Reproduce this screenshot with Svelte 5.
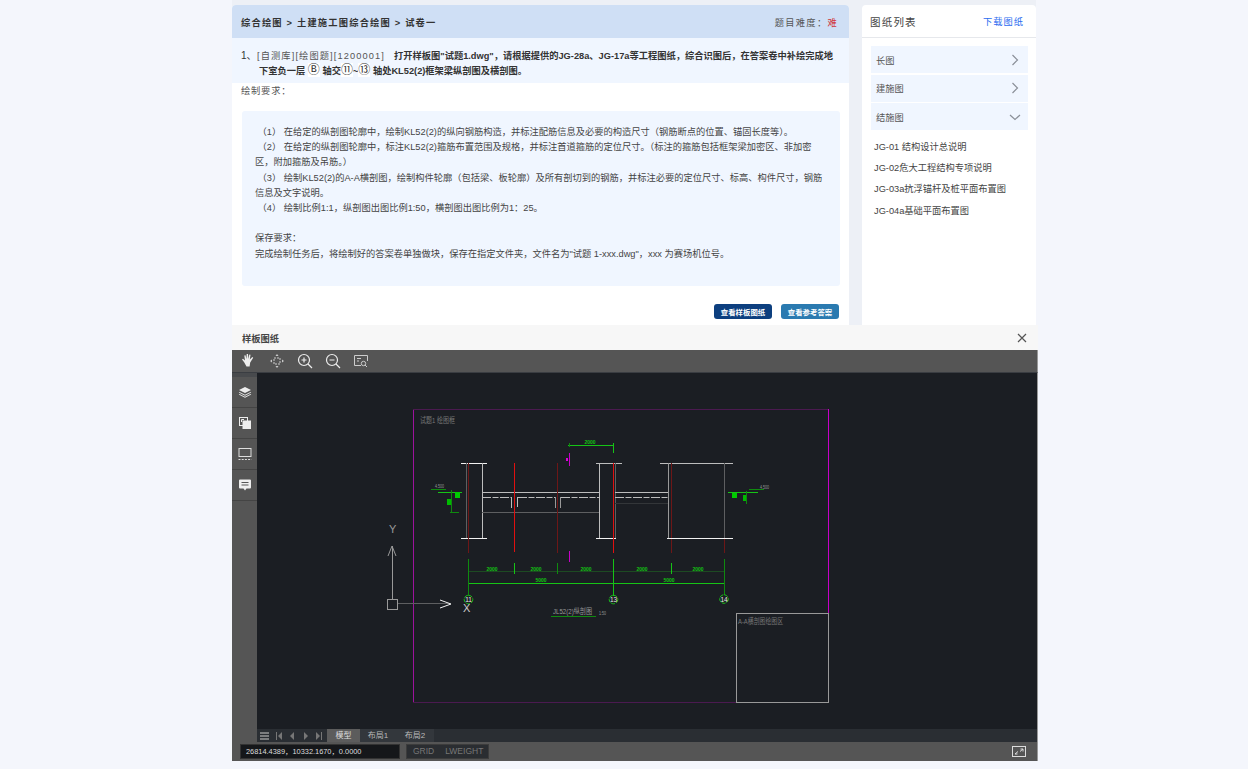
<script>
  const drawings = [
    { name: '长图', open: false },
    { name: '建施图', open: false },
    { name: '结施图', open: true }
  ];
  const files = ['JG-01 结构设计总说明', 'JG-02危大工程结构专项说明', 'JG-03a抗浮锚杆及桩平面布置图', 'JG-04a基础平面布置图'];

  // 图纸线条: [x1, y1, x2, y2, 颜色类]
  const lines = [
    [413.5, 409, 413.5, 703, 'mag'], [413, 409.5, 829, 409.5, 'dimmag'], [828.5, 409, 828.5, 613, 'magb'], [413, 702.5, 736, 702.5, 'dimmag'],
    [736.5, 613.5, 828.5, 613.5, 'gray'], [736.5, 613, 736.5, 703, 'gray'], [828.5, 613, 828.5, 703, 'gray'], [736, 702.5, 829, 702.5, 'gray'],
    [461, 463.5, 487, 463.5, 'white'], [461, 538.5, 487, 538.5, 'white'], [482.5, 463, 482.5, 538, 'light'], [466.5, 463, 466.5, 538, 'dim'],
    [468.5, 463, 468.5, 553, 'dred'], [482, 492.5, 600, 492.5, 'light'], [482, 512.5, 600, 512.5, 'dim'],
    [514.5, 463, 514.5, 552, 'red'], [557.5, 463, 557.5, 553, 'dred'],
    [511.5, 497, 511.5, 508, 'light'], [517.5, 497, 517.5, 507, 'light'], [555.5, 497, 555.5, 508, 'gray'], [560.5, 497, 560.5, 508, 'gray'],
    [599.5, 463, 599.5, 538, 'light'], [596, 463.5, 622, 463.5, 'light'], [596, 538.5, 616, 538.5, 'white'], [615.5, 463, 615.5, 538, 'dim'],
    [613.5, 463, 613.5, 553, 'red'], [615, 492.5, 669, 492.5, 'light'], [615, 503.5, 668, 503.5, 'faint'],
    [660, 463.5, 733, 463.5, 'light'], [668.5, 463, 668.5, 538, 'gray'], [671.5, 463, 671.5, 553, 'dred'], [724.5, 463, 724.5, 538, 'dim'],
    [724.5, 538, 724.5, 553, 'dred'], [667, 538.5, 733, 538.5, 'white'],
    [568, 445.5, 614, 445.5, 'green'], [613.5, 443, 613.5, 453, 'green'], [569.5, 443, 569.5, 447, 'dgreen'],
    [569.5, 453, 569.5, 466, 'magb'], [569.5, 551, 569.5, 562, 'magb'],
    [431, 489.5, 446, 489.5, 'dgreen'], [438, 492.5, 462, 492.5, 'green'], [451.5, 490, 451.5, 512, 'dgreen'], [450, 512.5, 459, 512.5, 'dgreen'],
    [728, 492.5, 758, 492.5, 'green'], [749, 489.5, 764, 489.5, 'dgreen'], [746.5, 491, 746.5, 504, 'dgreen'],
    [468, 571.5, 725, 571.5, 'dimgreen'], [468, 583.5, 725, 583.5, 'green'], [468.5, 559, 468.5, 596, 'dgreen'], [514.5, 563, 514.5, 574, 'green'],
    [557.5, 563, 557.5, 574, 'dgreen'], [613.5, 559, 613.5, 596, 'green'], [671.5, 563, 671.5, 574, 'green'], [724.5, 559, 724.5, 595, 'dgreen'],
    [392.5, 546, 392.5, 600, 'gray'], [398, 603.5, 450, 603.5, 'dim'], [392, 546, 388, 556, 'gray'], [392, 546, 396, 556, 'gray'],
    [440, 600, 451, 604, 'white'], [440, 608, 451, 604, 'white'], [551, 616.5, 596, 616.5, 'dgreen']
  ];
  const dashes = [[482, 497.5, 511, 497.5], [518, 497.5, 555, 497.5], [561, 497.5, 600, 497.5], [615, 497.5, 669, 497.5]];
  const dims = [[492, 571, '2000'], [536, 571, '2000'], [586, 571, '2000'], [642, 571, '2000'], [698, 571, '2000'], [541, 582, '5000'], [669, 582, '5000'], [590, 444, '2000']];
  const axes = [[468.5, 599.5, '11'], [613.5, 599.5, '13'], [724, 599, '14']];
</script>

<div class="page">
  <div class="inner">
    <main class="main">
      <div class="crumb">
        <span class="path">综合绘图 &gt; 土建施工图综合绘图 &gt; 试卷一</span>
        <span class="level">题目难度：<em>难</em></span>
      </div>
      <div class="question">
        <p class="q-line"><span class="no">1、</span><span class="tag">[自测库][绘图题][1200001]</span><b>打开样板图"试题1.dwg"，请根据提供的JG-28a、JG-17a等工程图纸，综合识图后，在答案卷中补绘完成地</b></p>
        <p class="q-next"><b>下室负一层 <i>Ⓑ</i> 轴交<i>⑪</i>~<i>⑬</i> 轴处KL52(2)框架梁纵剖图及横剖图。</b></p>
      </div>
      <div class="req-title">绘制要求：</div>
      <div class="req">
        <p>&nbsp;（1） 在给定的纵剖图轮廓中，绘制KL52(2)的纵向钢筋构造，并标注配筋信息及必要的构造尺寸（钢筋断点的位置、锚固长度等）。</p>
        <p>&nbsp;（2） 在给定的纵剖图轮廓中，标注KL52(2)箍筋布置范围及规格，并标注首道箍筋的定位尺寸。（标注的箍筋包括框架梁加密区、非加密<br />区，附加箍筋及吊筋。）</p>
        <p>&nbsp;（3） 绘制KL52(2)的A-A横剖图，绘制构件轮廓（包括梁、板轮廓）及所有剖切到的钢筋，并标注必要的定位尺寸、标高、构件尺寸，钢筋<br />信息及文字说明。</p>
        <p>&nbsp;（4） 绘制比例1:1，纵剖图出图比例1:50，横剖图出图比例为1：25。</p>
        <p>&nbsp;</p>
        <p>保存要求：</p>
        <p>完成绘制任务后，将绘制好的答案卷单独做块，保存在指定文件夹，文件名为"试题 1-xxx.dwg"，xxx 为赛场机位号。</p>
      </div>
      <div class="actions">
        <button class="btn navy">查看样板图纸</button>
        <button class="btn teal">查看参考答案</button>
      </div>
    </main>

    <aside class="side">
      <div class="side-head">
        <span class="side-title">图纸列表</span>
        <span class="download">下载图纸</span>
      </div>
      <div class="groups">
        {#each drawings as d}
          <div class="group">
            <span>{d.name}</span>
            <svg width="12" height="12" viewBox="0 0 12 12" fill="none" stroke="#8a8f98" stroke-width="1.2">
              {#if d.open}
                <path d="M1 4l5 4.500 5-4.500" />
              {:else}
                <path d="M3.500 1l5 5-5 5" />
              {/if}
            </svg>
          </div>
        {/each}
      </div>
      <ul class="files">
        {#each files as f}
          <li>{f}</li>
        {/each}
      </ul>
    </aside>
  </div>
</div>

<section class="modal">
  <header class="modal-head">
    <span>样板图纸</span>
    <svg width="10" height="10" viewBox="0 0 10 10" stroke="#555" stroke-width="1.2"><path d="M1 1l8 8M9 1l-8 8" /></svg>
  </header>
  <div class="toolbar">
    <svg width="16" height="16" viewBox="0 0 16 16" fill="#eee"><path d="M3 9L1 6.500l1-.7 2 1.700L3.300 2.500l1.200-.2 1 3.700.2-5h1.300l.3 5 1-4.500 1.200.3-.7 4.700 2.500-2.500.9.800-3 4.800-.6 3.900H5.500z" /></svg>
    <svg width="16" height="16" viewBox="0 0 16 16" fill="none" stroke="#ccc"><rect x="5" y="5" width="6" height="6" stroke-dasharray="2 1" /><path d="M8 1l-1.500 2h3zM8 15l-1.500-2h3zM1 8l2-1.500v3zM15 8l-2-1.500v3z" fill="#ccc" stroke="none" /></svg>
    <svg width="16" height="16" viewBox="0 0 16 16" fill="none" stroke="#eee" stroke-width="1.200"><circle cx="7" cy="7" r="5.500" /><path d="M11 11l4 4M4.500 7h5M7 4.500v5" /></svg>
    <svg width="16" height="16" viewBox="0 0 16 16" fill="none" stroke="#eee" stroke-width="1.200"><circle cx="7" cy="7" r="5.500" /><path d="M11 11l4 4M4.500 7h5" /></svg>
    <svg width="16" height="16" viewBox="0 0 16 16" fill="none" stroke="#ccc"><path d="M8 12.500H1.500v-10h13V8" /><path d="M4 5.500h4M4 8h2" /><circle cx="10.500" cy="10.500" r="2.200" /><path d="M12 12l2 2" /></svg>
  </div>
  <div class="stage">
    <nav class="rail">
      <div class="rail-item">
        <svg width="14" height="14" viewBox="0 0 14 14" fill="#eee"><path d="M7 2l6 3-6 3-6-3z" /><path d="M1.500 7L7 9.700 12.500 7l.7.500L7 10.700.8 7.500z" /><path d="M1.500 9L7 11.700 12.500 9l.7.500L7 12.700.8 9.500z" /></svg>
      </div>
      <div class="rail-item">
        <svg width="14" height="14" viewBox="0 0 14 14"><rect x="1.500" y="1.500" width="8" height="8" fill="none" stroke="#eee" /><rect x="4.500" y="4.500" width="8.500" height="8.500" fill="#eee" /><path d="M3.500 6V3.500H6" stroke="#eee" fill="none" /></svg>
      </div>
      <div class="rail-item">
        <svg width="14" height="14" viewBox="0 0 14 14" fill="none" stroke="#ddd"><rect x="1" y="1.500" width="12" height="8" /><path d="M.5 12.500h13" stroke-dasharray="2 1.200" /></svg>
      </div>
      <div class="rail-item">
        <svg width="14" height="14" viewBox="0 0 14 14"><path d="M2 1.500h10a1 1 0 0 1 1 1v7a1 1 0 0 1-1 1H8.500L7 12.500 5.500 10.500H2a1 1 0 0 1-1-1v-7a1 1 0 0 1 1-1z" fill="#eee" /><path d="M3.500 4.500h7M3.500 7h7" stroke="#555" /></svg>
      </div>
    </nav>
    <div class="canvas-col">
      <svg class="canvas" viewBox="257 373 780 356" width="780" height="356">
        {#each lines as [x1, y1, x2, y2, c]}
          <line {x1} {y1} {x2} {y2} class={c} />
        {/each}
        {#each dashes as [x1, y1, x2, y2]}
          <line {x1} {y1} {x2} {y2} class="light" stroke-dasharray="9 1.500 6 1.500" />
        {/each}
        {#each axes as [cx, cy, t]}
          <circle {cx} {cy} r="4.300" fill="none" stroke="#19c019" stroke-dasharray="4 1" />
          <text x={cx} y={cy + 2.500} class="axis-no">{t}</text>
        {/each}
        {#each dims as [x, y, t]}
          <text {x} {y} class="dim-text">{t}</text>
        {/each}
        <text x="420" y="423" class="cad-note" textLength="35" lengthAdjust="spacingAndGlyphs">试题1 绘图框</text>
        <text x="738" y="624" class="cad-note" textLength="45" lengthAdjust="spacingAndGlyphs">A-A横剖图绘图区</text>
        <text x="553" y="614" class="cad-title" textLength="39" lengthAdjust="spacingAndGlyphs">JL52(2)纵剖图</text>
        <text x="599" y="615" class="cad-small" textLength="7" lengthAdjust="spacingAndGlyphs">1:50</text>
        <text x="435" y="488" class="cad-small" textLength="9" lengthAdjust="spacingAndGlyphs">4.500</text>
        <text x="760" y="489" class="cad-small" textLength="9" lengthAdjust="spacingAndGlyphs">4.500</text>
        <text x="389" y="533" class="cad-y">Y</text>
        <text x="463" y="612" class="cad-x">X</text>
        <rect x="387.500" y="599.500" width="10" height="10" fill="none" stroke="#999" />
        <rect x="455" y="492" width="5" height="6" fill="#0c0" />
        <rect x="447" y="499" width="4" height="6" fill="#0b0" />
        <rect x="732" y="493" width="5" height="5" fill="#0c0" />
        <rect x="743" y="495" width="3" height="6" fill="#0b0" />
        <rect x="566" y="458" width="2" height="3" fill="#d0d" />
      </svg>
      <div class="tabs">
        <div class="tab-nav">
          <svg width="9" height="8" viewBox="0 0 9 8" fill="none" stroke="#ccc"><path d="M0 1h9M0 4h9M0 7h9" /></svg>
          <svg width="8" height="8" viewBox="0 0 8 8" fill="#777"><path d="M1 0h1v8H1zM7 0v8L3 4z" /></svg>
          <svg width="8" height="8" viewBox="0 0 8 8" fill="#777"><path d="M6 0v8L2 4z" /></svg>
          <svg width="8" height="8" viewBox="0 0 8 8" fill="#777"><path d="M2 0v8l4-4z" /></svg>
          <svg width="8" height="8" viewBox="0 0 8 8" fill="#777"><path d="M7 0H6v8h1zM1 0v8l4-4z" /></svg>
        </div>
        <span class="tab active">模型</span>
        <span class="tab">布局1</span>
        <span class="tab last">布局2</span>
      </div>
    </div>
  </div>
  <div class="status">
    <span class="coords">26814.4389，10332.1670，0.0000</span>
    <span class="modes"><span>GRID</span><span>LWEIGHT</span></span>
    <svg class="full" width="14" height="11" viewBox="0 0 14 11" fill="none" stroke="#ddd"><rect x=".5" y=".5" width="13" height="10" /><path d="M3 8l3-2.500M3 8h2.500M11 3L8 5.500M11 3H8.500M11 3v2.500" /></svg>
  </div>
</section>

<style>
  :global(body) {
    background: #f4f6fc;
    font-family: "Liberation Sans", "Noto Sans CJK SC", sans-serif;
    font-size: 9.25px;
    color: #333;
    overflow: hidden;
  }

  .page {
    height: 769px;
    padding-left: 232px;
    box-sizing: border-box;
  }

  .inner {
    display: flex;
    gap: 13px;
    width: 804px;
    height: 325px;
    padding-top: 5px;
    box-sizing: border-box;
    background: #edf0f6;
  }

  .main {
    width: 617px;
    height: 320px;
    background: #fff;
    border-radius: 4px 4px 0 0;
    overflow: hidden;
  }

  .crumb {
    display: flex;
    justify-content: space-between;
    align-items: center;
    height: 33px;
    padding: 0 11px 0 9px;
    background: #cfdff5;
  }

  .path {
    font-weight: 700;
    letter-spacing: 1.2px;
    color: #333;
  }

  .level {
    letter-spacing: 1.3px;
    color: #555;
  }

  .level em {
    font-style: normal;
    color: #d0333a;
  }

  .question {
    height: 45px;
    padding: 10px 9px 0;
    box-sizing: border-box;
    background: #f0f6ff;
    line-height: 15.5px;
  }

  .question p {
    margin: 0;
    height: 15.5px;
    white-space: nowrap;
  }

  .no {
    display: inline-block;
    width: 16px;
    font-size: 10px;
  }

  .tag {
    display: inline-block;
    width: 137px;
    letter-spacing: 1.1px;
    color: #555;
  }

  .q-next {
    padding-left: 18px;
  }

  .q-next i {
    font-style: normal;
    font-weight: 400;
    font-size: 12px;
    line-height: 12px;
    background: #fff;
  }

  .req-title {
    height: 26px;
    padding: 2px 9px 0;
    box-sizing: border-box;
    line-height: 13px;
    letter-spacing: 0.8px;
    color: #555;
  }

  .req {
    height: 175px;
    margin: 2px 9px 0 10px;
    padding: 14px 13px 0;
    box-sizing: border-box;
    background: #f0f6ff;
    border-radius: 3px;
    line-height: 15.2px;
    color: #444;
    white-space: nowrap;
  }

  .req p {
    margin: 0;
  }

  .actions {
    display: flex;
    justify-content: flex-end;
    gap: 9px;
    padding: 18px 10px 0 0;
  }

  .btn {
    width: 58px;
    height: 15px;
    padding: 0;
    border: none;
    border-radius: 3px;
    color: #fff;
    font-family: inherit;
    font-size: 7.4px;
    font-weight: 700;
  }

  .navy {
    background: #0d3f7f;
  }

  .teal {
    background: #2a7ab0;
  }

  .side {
    width: 174px;
    height: 320px;
    background: #fff;
    border-radius: 4px 4px 0 0;
  }

  .side-head {
    display: flex;
    justify-content: space-between;
    align-items: center;
    height: 32px;
    padding: 0 12px 0 8px;
    border-bottom: 1px solid #e6e8ec;
  }

  .side-title {
    font-size: 10.5px;
    letter-spacing: 1.2px;
    color: #444;
  }

  .download {
    letter-spacing: 1px;
    color: #2b6cf0;
  }

  .groups {
    display: flex;
    flex-direction: column;
    gap: 1.5px;
    margin: 8px 8px 0 9px;
  }

  .group {
    display: flex;
    justify-content: space-between;
    align-items: center;
    height: 27px;
    padding: 0 7px 0 5px;
    background: #f0f6ff;
    color: #555;
  }

  .files {
    list-style: none;
    margin: 7px 0 0;
    padding: 0 0 0 12px;
    color: #444;
  }

  .files li {
    height: 21.2px;
    line-height: 21.2px;
    white-space: nowrap;
  }

  .modal {
    position: absolute;
    left: 232px;
    top: 325px;
    width: 806px;
    height: 436px;
    display: flex;
    flex-direction: column;
    background: #f7f7f7;
  }

  .modal-head {
    display: flex;
    justify-content: space-between;
    align-items: center;
    height: 25px;
    padding: 0 11px 0 10px;
    box-sizing: border-box;
    font-weight: 700;
    color: #444;
  }

  .toolbar {
    display: flex;
    align-items: center;
    gap: 12px;
    height: 23px;
    padding: 0 9px;
    box-sizing: border-box;
    background: #555;
    border-bottom: 1px solid #3a3d42;
    border-right: 1px solid #999;
    flex: none;
  }

  .stage {
    display: flex;
    height: 369px;
    flex: none;
    background: #555;
    border-right: 1px solid #999;
  }

  .rail {
    width: 25px;
    flex: none;
    border-top: 4px solid #484a4d;
    box-sizing: border-box;
    background: #555;
  }

  .rail-item {
    display: flex;
    justify-content: center;
    align-items: center;
    height: 30px;
    border-bottom: 1px solid #444;
  }

  .rail-item svg {
    display: block;
  }

  .canvas-col {
    width: 780px;
    display: flex;
    flex-direction: column;
  }

  .canvas {
    display: block;
    flex: none;
    background: #1b1e23;
  }

  .canvas line {
    stroke-width: 1;
  }

  .mag { stroke: #9d129d; }
  .magb { stroke: #c800c8; }
  .dimmag { stroke: #4b1a50; }
  .gray { stroke: #999; }
  .white { stroke: #f2f2f2; }
  .light { stroke: #bdbdbd; }
  .dim { stroke: #5e5f61; }
  .faint { stroke: #333639; }
  .red { stroke: #e01010; }
  .dred { stroke: #6d1717; }
  .green { stroke: #16c416; }
  .dgreen { stroke: #0f8a0f; }
  .dimgreen { stroke: #1d4a22; }

  .dim-text {
    font-size: 5px;
    font-weight: 700;
    fill: #12c012;
    text-anchor: middle;
  }

  .axis-no {
    font-size: 6.5px;
    fill: #e8e8e8;
    text-anchor: middle;
  }

  .cad-note {
    font-size: 8px;
    fill: #777;
  }

  .cad-title {
    font-size: 7.5px;
    fill: #999;
  }

  .cad-small {
    font-size: 5.5px;
    fill: #999;
  }

  .cad-y {
    font-size: 11px;
    fill: #999;
  }

  .cad-x {
    font-size: 11px;
    fill: #ccc;
  }

  .tabs {
    display: flex;
    align-items: stretch;
    height: 13px;
    background: #2a2e33;
    color: #bbb;
    font-size: 8px;
    line-height: 13px;
  }

  .tab-nav {
    display: flex;
    align-items: center;
    gap: 5.5px;
    width: 70px;
    padding-left: 3px;
    box-sizing: border-box;
  }

  .tab {
    width: 36px;
    text-align: center;
    background: #33373c;
  }

  .tab.last {
    width: 38px;
  }

  .tab.active {
    width: 33px;
    background: #5c5c5c;
    color: #ddd;
  }

  .status {
    display: flex;
    align-items: center;
    height: 19px;
    padding-left: 8px;
    background: #555;
    border-right: 1px solid #999;
    flex: none;
  }

  .coords {
    width: 160px;
    height: 15px;
    padding-left: 5px;
    box-sizing: border-box;
    background: #15171a;
    border: 1px solid #333;
    color: #ddd;
    font-size: 7.4px;
    line-height: 13px;
  }

  .modes {
    display: flex;
    gap: 11px;
    width: 83px;
    height: 15px;
    margin-left: 6px;
    padding: 0 6px;
    box-sizing: border-box;
    background: #2a2d31;
    border: 1px solid #3c3c3c;
    color: #777;
    font-size: 8.5px;
    line-height: 13px;
    white-space: nowrap;
  }

  .full {
    margin-left: auto;
    margin-right: 11px;
  }
</style>
